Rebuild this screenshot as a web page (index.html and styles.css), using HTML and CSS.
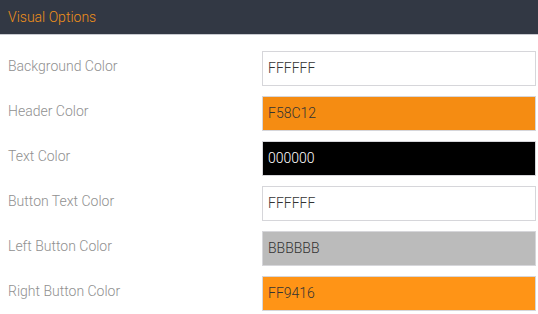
FILE: index.html
```html
<!DOCTYPE html>
<html>
<head>
<meta charset="utf-8">
<link rel="stylesheet" href="styles.css">
</head>
<body>
<div class="header">Visual Options</div>
<div class="form">
  <div class="row"><div class="label">Background Color</div><div class="input" style="background:#FFFFFF;color:#333">FFFFFF</div></div>
  <div class="row"><div class="label">Header Color</div><div class="input" style="background:#F58C12;color:#333">F58C12</div></div>
  <div class="row"><div class="label">Text Color</div><div class="input" style="background:#000000;color:#fff">000000</div></div>
  <div class="row"><div class="label">Button Text Color</div><div class="input" style="background:#FFFFFF;color:#333">FFFFFF</div></div>
  <div class="row"><div class="label">Left Button Color</div><div class="input" style="background:#BBBBBB;color:#333">BBBBBB</div></div>
  <div class="row"><div class="label">Right Button Color</div><div class="input" style="background:#FF9416;color:#333">FF9416</div></div>
</div>
</body>
</html>
```
FILE: styles.css
```css
html, body {
  margin: 0;
  padding: 0;
  background: #fff;
  font-family: Roboto, "Liberation Sans", sans-serif;
  font-weight: 300;
}
.header {
  height: 34px;
  background: #323844;
  border-bottom: 1px solid #c8cad0;
  color: #f0901a;
  font-size: 14px;
  line-height: 34px;
  padding-left: 8px;
}
.form {
  display: flex;
  flex-direction: column;
  gap: 10px;
  padding: 16px 2px 0 8px;
}
.row {
  display: grid;
  grid-template-columns: 254px 274px;
  align-items: center;
  height: 35px;
}
.label {
  color: #909090;
  font-size: 14px;
  margin-top: -5px;
}
.input {
  box-sizing: border-box;
  height: 35px;
  border: 1px solid #d6d6da;
  padding: 0 5px;
  font-size: 14px;
  line-height: 33px;
}
```
